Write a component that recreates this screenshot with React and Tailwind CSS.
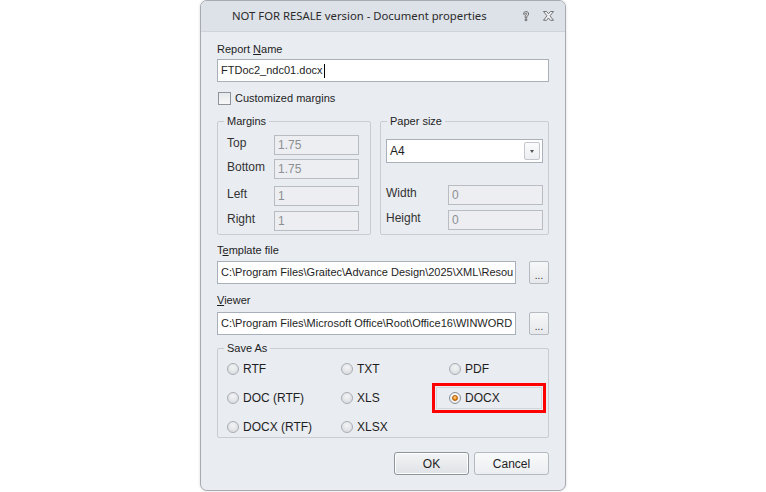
import React from "react";

// Radio button drawn like the classic Windows themed one
function Radio({ checked, label }) {
  return (
    <div className="flex items-center gap-[4px]">
      <span
        className={
          "w-[12px] h-[12px] rounded-full border flex items-center justify-center " +
          (checked
            ? "border-[#8a8f97] bg-[radial-gradient(circle_at_50%_40%,#ffffff,#e3e5e8)]"
            : "border-[#a9adb3] bg-[radial-gradient(circle_at_50%_35%,#f4f5f6,#d3d6da)]")
        }
      >
        {checked && (
          <span className="w-[6px] h-[6px] rounded-full border border-[#b35a00] bg-[radial-gradient(circle_at_45%_35%,#ffd9a0,#f08a12_60%,#c96200)]" />
        )}
      </span>
      <span>{label}</span>
    </div>
  );
}

function Field({ value, disabled, className = "" }) {
  return (
    <div
      className={
        "h-[20px] border flex items-center px-[3px] " +
        (disabled
          ? "bg-[#eceef1] border-[#b9bdc3] text-[#8c8f93] "
          : "bg-white border-[#abb2bc] text-[#111] ") +
        className
      }
    >
      {value}
    </div>
  );
}

function Group({ title, className = "", children }) {
  return (
    <fieldset className={"border border-[#c9cdd3] rounded-[2px] " + className}>
      <legend className="ml-[6px] px-[3px] leading-[14px]">{title}</legend>
      {children}
    </fieldset>
  );
}

export default function App() {
  return (
    <div className="w-[766px] h-[492px] bg-white flex justify-center overflow-hidden">
      <div
        className="w-[366px] h-[491px] bg-[#e9ecf1] border border-[#a7abb1] rounded-[7px] flex flex-col text-[11px] text-[#1e1e1e] shadow-[0_0_3px_rgba(0,0,0,0.15)]"
        style={{ fontFamily: '"Liberation Sans", Arial, sans-serif' }}
      >
        {/* title bar */}
        <div className="h-[31px] shrink-0 bg-[#dde1e8] border-b border-[#d0d4da] rounded-t-[6px] flex items-center pl-[31px] pr-[10px]">
          <span
            className="text-[11.3px] text-[#2b2b2b] flex-1"
            style={{ fontFamily: '"Noto Sans", "Open Sans", sans-serif' }}
          >
            NOT FOR RESALE version - Document properties
          </span>
          <svg width="12" height="12" viewBox="0 0 12 12" className="mr-[10px]">
            <path
              d="M3.5 4.2 Q3.5 1.5 6 1.5 Q8.7 1.5 8.7 4 Q8.7 5.5 6.8 6.3 L6.8 8 L5.2 8 L5.2 5.5 Q7 4.9 7 4 Q7 3 6 3 Q5 3 5 4.2 Z M5.2 9 L6.8 9 L6.8 10.6 L5.2 10.6 Z"
              fill="#f3f4f6"
              stroke="#555"
              strokeWidth="0.8"
            />
          </svg>
          <svg width="13" height="12" viewBox="0 0 13 12">
            <path
              d="M1.5 1.5 L4.5 1.5 L6.5 3.8 L8.5 1.5 L11.5 1.5 L8 5.8 L11.5 10.3 L8.5 10.3 L6.5 7.9 L4.5 10.3 L1.5 10.3 L5 5.8 Z"
              fill="#f3f4f6"
              stroke="#555"
              strokeWidth="0.8"
            />
          </svg>
        </div>

        {/* body */}
        <div className="px-[16px] flex flex-col">
          <div className="mt-[10px] leading-[14px]">
            Report <span className="underline">N</span>ame
          </div>
          <div className="mt-[3px] h-[23px] bg-white border border-[#a9b0ba] flex items-center px-[3px] text-[11px]">
            FTDoc2_ndc01.docx<span className="w-px h-[14px] bg-black ml-[1px]" />
          </div>
          <div className="mt-[9px] flex items-center gap-[4px] leading-[14px]">
            <span className="w-[13px] h-[13px] border border-[#8e949b] bg-[linear-gradient(#e6e8eb,#f8f8f9)] ml-[1px]" />
            <span>Customized margins</span>
          </div>

          {/* margins + paper size */}
          <div className="mt-[9px] flex gap-[9px]">
            <Group title="Margins" className="w-[154px] h-[121px]">
              <div className="pl-[9px] pr-[11px] pt-[7px] flex flex-col">
                {[
                  ["Top", "1.75", 0],
                  ["Bottom", "1.75", 4],
                  ["Left", "1", 7],
                  ["Right", "1", 5],
                ].map(([l, v, m]) => (
                  <div key={l} className="flex items-start" style={{ marginTop: m }}>
                    <span className="w-[47px] leading-[14px] mt-[1px] text-[12px] text-[#333]">{l}</span>
                    <Field value={v} disabled className="w-[85px] text-[12px]" />
                  </div>
                ))}
              </div>
            </Group>
            <Group title="Paper size" className="w-[170px] h-[121px]">
              <div className="pl-[5px] pr-[5px] pt-[11px] flex flex-col">
                <div className="h-[24px] bg-white border border-[#a9b0ba] flex items-center pl-[3px] pr-[2px] text-[12px]">
                  <span className="flex-1">A4</span>
                  <span className="w-[16px] h-[18px] border border-[#c3c7cd] rounded-[2px] bg-[linear-gradient(#fbfbfc,#eceef1)] flex items-center justify-center">
                    <span className="w-0 h-0 border-l-[2.5px] border-r-[2.5px] border-t-[3px] border-l-transparent border-r-transparent border-t-[#555]" />
                  </span>
                </div>
                {[
                  ["Width", 22],
                  ["Height", 5],
                ].map(([l, m]) => (
                  <div key={l} className="flex items-start" style={{ marginTop: m }}>
                    <span className="w-[62px] leading-[14px] mt-[1px] text-[12px] text-[#333]">{l}</span>
                    <Field value="0" disabled className="w-[95px] text-[12px]" />
                  </div>
                ))}
              </div>
            </Group>
          </div>

          {/* template + viewer */}
          <div className="mt-[8px] leading-[14px]">
            T<span className="underline">e</span>mplate file
          </div>
          <div className="mt-[4px] flex gap-[13px]">
            <div className="w-[299px] h-[23px] bg-white border border-[#a9b0ba] flex items-center px-[3px] overflow-hidden whitespace-nowrap text-[11px]">
              C:\Program Files\Graitec\Advance Design\2025\XML\Resou
            </div>
            <button className="w-[20px] h-[23px] border border-[#b5bac1] rounded-[2px] bg-[linear-gradient(#f6f7f8,#e6e8eb)] text-[10px] leading-none pt-[6px] text-[#333]">
              ...
            </button>
          </div>
          <div className="mt-[9px] leading-[14px]">
            <span className="underline">V</span>iewer
          </div>
          <div className="mt-[5px] flex gap-[13px]">
            <div className="w-[299px] h-[23px] bg-white border border-[#a9b0ba] flex items-center px-[3px] overflow-hidden whitespace-nowrap text-[11px]">
              C:\Program Files\Microsoft Office\Root\Office16\WINWORD
            </div>
            <button className="w-[20px] h-[23px] border border-[#b5bac1] rounded-[2px] bg-[linear-gradient(#f6f7f8,#e6e8eb)] text-[10px] leading-none pt-[6px] text-[#333]">
              ...
            </button>
          </div>

          {/* save as */}
          <Group title="Save As" className="mt-[6px] h-[97px]">
            <div className="grid grid-cols-[114px_91px_1fr] grid-rows-[29px_29px_29px] pl-[9px] -mt-[1px] items-center text-[12px]">
              <Radio label="RTF" />
              <Radio label="TXT" />
              <div className="pl-[17px]">
                <Radio label="PDF" />
              </div>
              <Radio label="DOC (RTF)" />
              <Radio label="XLS" />
              <div className="w-[114px] h-[30px] border-[3px] border-[#ff0000] flex items-center p-[1px]">
                <div className="w-full h-full border border-[#d2d5da] flex items-center pl-[12px]">
                  <Radio checked label="DOCX" />
                </div>
              </div>
              <Radio label="DOCX (RTF)" />
              <Radio label="XLSX" />
              <div />
            </div>
          </Group>

          {/* buttons */}
          <div className="mt-[14px] flex justify-end gap-[5px] text-[12px]">
            <button className="w-[75px] h-[23px] border border-[#8f949b] rounded-[3px] bg-[linear-gradient(#f3f4f5,#dfe2e6)] shadow-[inset_0_0_0_1px_#fff]">
              OK
            </button>
            <button className="w-[75px] h-[23px] border border-[#b5bac1] rounded-[3px] bg-[linear-gradient(#f8f9fa,#eceef1)]">
              Cancel
            </button>
          </div>
        </div>
      </div>
    </div>
  );
}
